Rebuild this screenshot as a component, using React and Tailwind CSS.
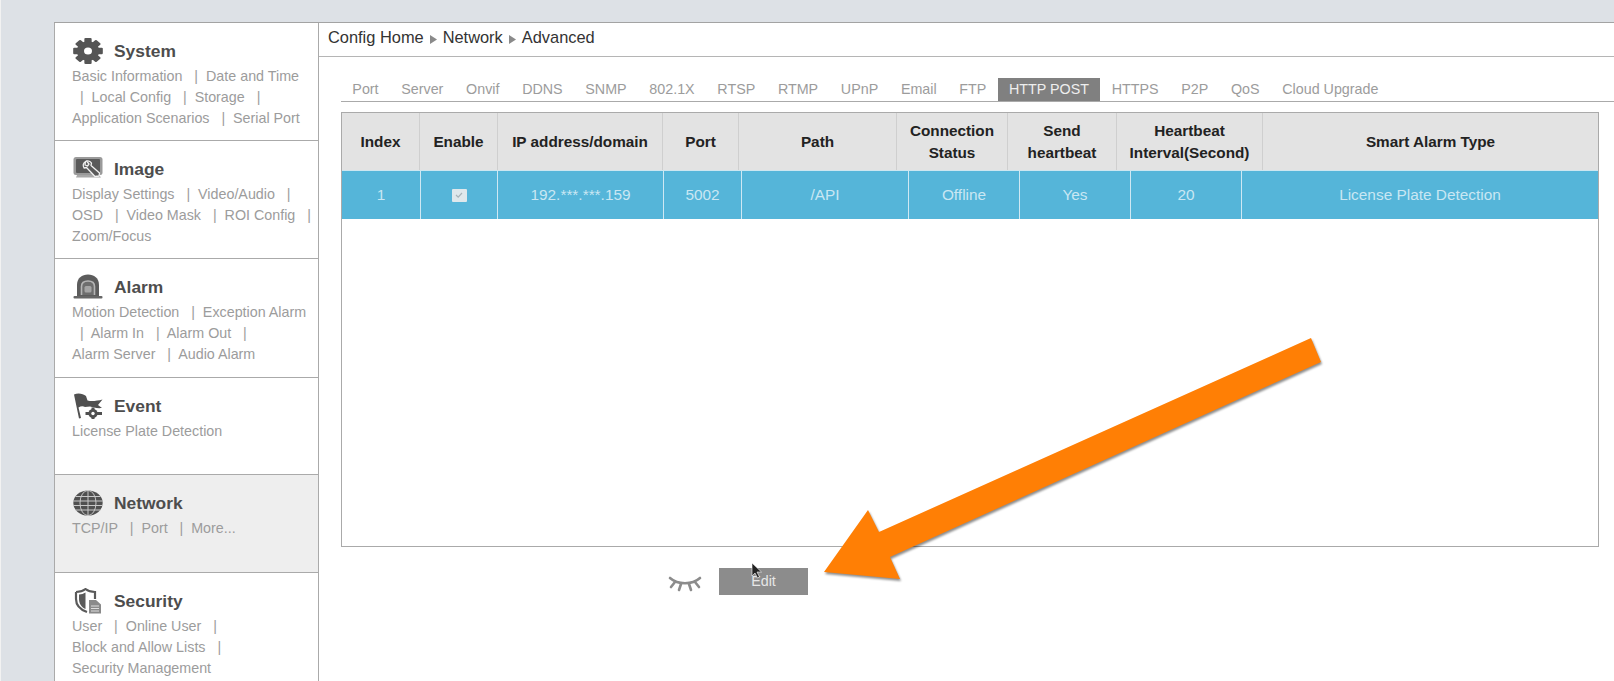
const GearIcon = () => (
    <svg width="30" height="26" viewBox="0 0 30 26">
        <g fill="#555" transform="translate(15 13) scale(1.14 1) translate(-15 -13)">
            {[0, 45, 90, 135, 180, 225, 270, 315].map((a) => (
                <rect key={a} x="11.8" y="0" width="6.4" height="6" rx="1" transform={`rotate(${a} 15 13)`} />
            ))}
            <circle cx="15" cy="13" r="9.8" />
        </g>
        <ellipse cx="15" cy="13" rx="4" ry="3.6" fill="#fff" />
    </svg>
);

const ImageIcon = () => (
    <svg width="30" height="26" viewBox="0 0 30 26">
        <rect x="0.5" y="1" width="29" height="18" rx="2.5" fill="#9a9a9a" />
        <rect x="3" y="3" width="24" height="14" rx="1" fill="#5a5a5a" />
        <path d="M4 19 H26 L28 21.5 H3 Z" fill="#a8a8a8" />
        <path d="M12.5 5.5 a4.5 4.5 0 0 0 -1.5 6.5 l2.5 -0.5 l8.5 9 l4 -0.5 l0.5 -3 l-8.5 -7.5 l0.5 -2.5 a4.5 4.5 0 0 0 -5 -2 l2.5 3 l-1.5 2 l-2.5 -1 Z" fill="#5a5a5a" stroke="#f2f2f2" strokeWidth="1.3" strokeLinejoin="round" />
    </svg>
);

const AlarmIcon = () => (
    <svg width="30" height="26" viewBox="0 0 30 26">
        <path d="M4 22 V11 C4 4 9 0.5 15 0.5 C21 0.5 26 4 26 11 V22 Z" fill="#5c5c5c" />
        <path d="M8.5 21 V12.5 C8.5 9 11 7 15 7 C19 7 21.5 9 21.5 12.5 V21" fill="#6e6e6e" stroke="#b5b5b5" strokeWidth="1.6" />
        <rect x="11.5" y="12" width="7" height="6.5" rx="1.5" fill="#a5a5a5" />
        <rect x="0.5" y="22" width="29" height="2.5" rx="1" fill="#666" />
    </svg>
);

const EventIcon = () => (
    <svg width="30" height="26" viewBox="0 0 30 26">
        <path d="M1 1.5 C5 -0.5 10 0.5 13 3 L14.5 7.5 C18 8.5 24 8 29.5 6.5 L25 12 L29 15 C24 15.5 20 14.5 17 13.5 L12 14 C10 13 8 13 5.5 14.5 L8 25 L6 25.5 Z" fill="#505050" />
        <g fill="#505050">
            <circle cx="20" cy="20.5" r="4.6" />
            <rect x="18.5" y="14.5" width="3" height="3" />
            <rect x="24" y="19" width="5" height="3" />
            <rect x="12.5" y="19" width="4" height="3" />
            <rect x="18.5" y="23.5" width="3" height="2.5" />
        </g>
        <circle cx="20" cy="20.5" r="1.7" fill="#fff" />
    </svg>
);

const NetworkIcon = () => (
    <svg width="30" height="26" viewBox="0 0 30 26">
        <ellipse cx="15" cy="13" rx="14.7" ry="12.6" fill="#505050" />
        <g fill="none" stroke="#c8c8c8" strokeWidth="1">
            <ellipse cx="15" cy="13" rx="8" ry="12.6" />
            <path d="M15 0.5 V25.5 M2.5 6.5 H27.5 M0.5 11 H29.5 M0.5 15.5 H29.5 M2.5 20 H27.5" />
        </g>
    </svg>
);

const SecurityIcon = () => (
    <svg width="30" height="26" viewBox="0 0 30 26">
        <path d="M3 4 C7 4 10 3 12.5 1 C15 3 18 4 22 4 V11 M14 24 C7 21.5 3 17 3 11 V4" fill="none" stroke="#5a5a5a" strokeWidth="2.2" />
        <path d="M6 6.5 C8.5 6.5 10.5 5.5 12.5 4.5 V21 C8 19 6 15 6 11 Z" fill="#5a5a5a" />
        <path d="M16 12 H23 L28 16.5 V25.5 H16 Z" fill="#8a8a8a" />
        <path d="M18 18 H26 M18 20.5 H26 M18 23 H26" stroke="#ddd" strokeWidth="1" />
    </svg>
);

const sections = [
    { title: 'System', icon: <GearIcon />, h: 'h-[118px]', lines: ['Basic Information   |  Date and Time', '  |  Local Config   |  Storage   |', 'Application Scenarios   |  Serial Port'] },
    { title: 'Image', icon: <ImageIcon />, h: 'h-[118px]', lines: ['Display Settings   |  Video/Audio   |', 'OSD   |  Video Mask   |  ROI Config   |', 'Zoom/Focus'] },
    { title: 'Alarm', icon: <AlarmIcon />, h: 'h-[119px]', lines: ['Motion Detection   |  Exception Alarm', '  |  Alarm In   |  Alarm Out   |', 'Alarm Server   |  Audio Alarm'] },
    { title: 'Event', icon: <EventIcon />, h: 'h-[97px]', lines: ['License Plate Detection'] },
    { title: 'Network', icon: <NetworkIcon />, h: 'h-[98px]', active: true, lines: ['TCP/IP   |  Port   |  More...'] },
    { title: 'Security', icon: <SecurityIcon />, h: 'flex-1', last: true, lines: ['User   |  Online User   |', 'Block and Allow Lists   |', 'Security Management'] },
];

const tabs = ['Port', 'Server', 'Onvif', 'DDNS', 'SNMP', '802.1X', 'RTSP', 'RTMP', 'UPnP', 'Email', 'FTP', 'HTTP POST', 'HTTPS', 'P2P', 'QoS', 'Cloud Upgrade'];

const headers = [
    { w: 'w-[78px]', label: ['Index'] },
    { w: 'w-[78px]', label: ['Enable'] },
    { w: 'w-[165px]', label: ['IP address/domain'] },
    { w: 'w-[76px]', label: ['Port'] },
    { w: 'w-[158px]', label: ['Path'] },
    { w: 'w-[111px]', label: ['Connection', 'Status'] },
    { w: 'w-[109px]', label: ['Send', 'heartbeat'] },
    { w: 'w-[146px]', label: ['Heartbeat', 'Interval(Second)'] },
    { w: 'flex-1', label: ['Smart Alarm Type'] },
];

const row = [
    { w: 'w-[79px]', value: '1' },
    { w: 'w-[77px]', check: true },
    { w: 'w-[166px]', value: '192.***.***.159' },
    { w: 'w-[78px]', value: '5002' },
    { w: 'w-[167px]', value: '/API' },
    { w: 'w-[111px]', value: 'Offline' },
    { w: 'w-[111px]', value: 'Yes' },
    { w: 'w-[111px]', value: '20' },
    { w: 'flex-1', value: 'License Plate Detection' },
];

const Crumb = () => (
    <svg width="7" height="9" viewBox="0 0 7 9" className="mx-[6px] mt-[5px]">
        <polygon points="0,0 7,4.5 0,9" fill="#8a8a8a" />
    </svg>
);

export default function App() {
    return (
        <div className="relative h-[681px] w-full overflow-hidden border-l border-[#f2f2f2] bg-[#dde1e6] pl-[53px] pt-[22px] font-['Liberation_Sans',Arial,sans-serif]">
            <div className="flex h-full border-t-[1.5px] border-[#a3a3a3] bg-white">
                {/* Sidebar */}
                <div className="flex w-[265px] shrink-0 flex-col border-x-[1.5px] border-[#aaa]">
                    {sections.map((s) => (
                        <div
                            key={s.title}
                            className={`${s.h} ${s.last ? '' : 'border-b-[1.5px] border-[#aaa]'} ${s.active ? 'bg-[#eeeeee]' : 'bg-white'} pl-[17px] pt-[15px]`}
                        >
                            <div className="mb-[1.5px] flex h-[26px] items-center gap-[11px] pl-[1px]">
                                {s.icon}
                                <span className="text-[17.4px] font-bold text-[#4d4d4d]">{s.title}</span>
                            </div>
                            {s.lines.map((line) => (
                                <div key={line} className="whitespace-pre text-[14.3px] leading-[21.3px] text-[#9c9c9c]">
                                    {line}
                                </div>
                            ))}
                        </div>
                    ))}
                </div>

                {/* Main */}
                <div className="min-w-0 flex-1">
                    <div className="flex h-[34px] items-center border-b-[1.5px] border-[#b5b5b5] pb-[5px] pl-[9px] text-[16.4px] text-[#333]">
                        Config Home
                        <Crumb />
                        Network
                        <Crumb />
                        Advanced
                    </div>

                    <div className="ml-[22px] mt-[21px] flex h-[24px] border-b-[1.5px] border-[#aaa] text-[14.3px] text-[#9c9c9c]">
                        {tabs.map((t) => (
                            <div
                                key={t}
                                className={`flex items-center px-[11.35px] ${t === 'HTTP POST' ? 'bg-[#808080] text-[#eeeeee]' : ''}`}
                            >
                                {t}
                            </div>
                        ))}
                    </div>

                    <div className="ml-[22px] mr-[15px] mt-[10px] h-[435px] border-[1.5px] border-[#aaa]">
                        <div className="flex h-[57px] bg-[#e3e3e3] text-[15.3px] font-bold leading-[22px] text-[#222]">
                            {headers.map((h, i) => (
                                <div
                                    key={h.label[0]}
                                    className={`${h.w} flex flex-col items-center justify-center ${i < headers.length - 1 ? 'border-r-[1.5px] border-[#cfcfcf]' : ''}`}
                                >
                                    {h.label.map((l) => (
                                        <span key={l}>{l}</span>
                                    ))}
                                </div>
                            ))}
                        </div>
                        <div className="flex h-[49px] border-t border-[#cde6f0] bg-[#55b5d9] text-[15.4px] text-[#c9e7f3]">
                            {row.map((c, i) => (
                                <div
                                    key={c.w + i}
                                    className={`${c.w} flex items-center justify-center ${i < row.length - 1 ? 'border-r-[1.5px] border-[#cfe8f3]' : ''}`}
                                >
                                    {c.check ? (
                                        <div className="flex h-[13px] w-[15px] items-center justify-center rounded-[1px] bg-[#dfe8ec]">
                                            <svg width="10" height="10" viewBox="0 0 10 10">
                                                <path d="M2 5 L4.2 7.2 L8 3" fill="none" stroke="#a8b4ba" strokeWidth="1.2" />
                                            </svg>
                                        </div>
                                    ) : (
                                        c.value
                                    )}
                                </div>
                            ))}
                        </div>
                    </div>

                    <div className="mt-[21px] flex items-center pl-[349px]">
                        <svg width="34" height="18" viewBox="0 0 34 18" className="mt-[5px]">
                            <g fill="none" stroke="#8c8c8c" strokeWidth="2.6" strokeLinecap="round">
                                <path d="M2 3 C10 10 24 10 32 3" />
                                <path d="M7 7 L3 12 M13 9 L11 15 M21 9 L23 15 M27 7 L31 12" />
                            </g>
                        </svg>
                        <button className="ml-[17px] flex h-[27px] w-[89px] items-center justify-center bg-[#8c8c8c] text-[14.3px] text-[#e6e6e6]">
                            Edit
                        </button>
                    </div>
                </div>
            </div>

            {/* Annotation arrow drawn over the screenshot */}
            <svg className="pointer-events-none absolute -left-px top-0 drop-shadow-[1px_2px_1px_rgba(0,0,0,0.45)]" width="1614" height="681" viewBox="0 0 1614 681">
                <polygon points="1311,338 1321,362 890,557 900,579 824,572 868,510 879,532" fill="#ff7f05" />
            </svg>
            {/* Mouse pointer */}
            <svg className="pointer-events-none absolute left-[750px] top-[562px]" width="12" height="18" viewBox="0 0 12 18">
                <path d="M1 1 V14 L4 11 L6.5 16 L8.5 15 L6 10 L10.5 10 Z" fill="#222" stroke="#fff" strokeWidth="0.6" />
            </svg>
        </div>
    );
}
